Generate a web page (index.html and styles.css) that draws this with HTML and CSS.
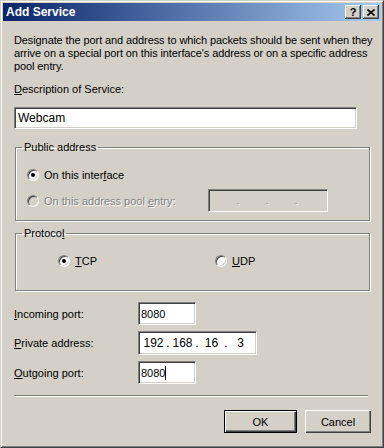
FILE: index.html
```html
<!DOCTYPE html>
<html lang="en">
<head>
<meta charset="UTF-8">
<meta name="viewport" content="width=device-width, initial-scale=1.0">
<title>Add Service</title>
<link rel="stylesheet" href="styles.css">
</head>
<body>

  <div class="window">
    <div class="titlebar">
      <span class="title">Add Service</span>
      <div class="title-buttons">
        <span class="tbtn">?</span>
        <span class="tbtn">
          <svg width="8" height="7" viewBox="0 0 8 7"><path d="M0.5 0.5 L7.5 6.5 M7.5 0.5 L0.5 6.5" stroke="#000" stroke-width="1.6"/></svg>
        </span>
      </div>
    </div>

    <div class="client">
      <p class="intro">Designate the port and address to which packets should be sent when they<br>arrive on a special port on this interface's address or on a specific address<br>pool entry.</p>

      <div class="field-label"><u>D</u>escription of Service:</div>
      <div class="textbox desc">Webcam</div>

      <fieldset class="group public">
        <legend>Public address</legend>
        <div class="group-body">
          <div class="radio-row">
            <span class="radio checked"></span>
            <span>On this inter<u>f</u>ace</span>
          </div>
          <div class="radio-row disabled">
            <span class="radio"></span>
            <span>On this address pool <u>e</u>ntry:</span>
            <div class="textbox ipbox off">
              <span class="seg"></span><span class="dot">.</span>
              <span class="seg"></span><span class="dot">.</span>
              <span class="seg"></span><span class="dot">.</span>
              <span class="seg"></span>
            </div>
          </div>
        </div>
      </fieldset>

      <fieldset class="group protocol">
        <legend>Protoco<u>l</u></legend>
        <div class="group-body proto-body">
          <div class="radio-row proto-item">
            <span class="radio checked"></span>
            <span><u>T</u>CP</span>
          </div>
          <div class="radio-row">
            <span class="radio"></span>
            <span><u>U</u>DP</span>
          </div>
        </div>
      </fieldset>

      <div class="ports">
        <span class="port-label"><u>I</u>ncoming port:</span>
        <div class="textbox port">8080</div>
        <span class="port-label"><u>P</u>rivate address:</span>
        <div class="textbox ipbox private">
          <span class="seg">192</span><span class="dot">.</span>
          <span class="seg">168</span><span class="dot">.</span>
          <span class="seg">16</span><span class="dot">.</span>
          <span class="seg">3</span>
        </div>
        <span class="port-label"><u>O</u>utgoing port:</span>
        <div class="textbox port">8080<span class="caret"></span></div>
      </div>

      <div class="separator"></div>

      <div class="button-row">
        <button class="btn default">OK</button>
        <button class="btn cancel">Cancel</button>
      </div>
    </div>
  </div>

</body>
</html>
```

FILE: styles.css
```css
* {
  box-sizing: border-box;
  margin: 0;
  padding: 0;
}

body {
  font-family: Tahoma, "Liberation Sans", Arial, sans-serif;
  font-size: 11px;
  color: #000;
  background-color: #d4d0c8;
}

/* Window frame */

.window {
  width: 384px;
  height: 448px;
  border: 1px solid;
  border-color: #d4d0c8 #404040 #404040 #d4d0c8;
  box-shadow: inset 1px 1px #fff, inset -1px -1px #808080;
  background-color: #d4d0c8;
  padding: 2px;
  display: flex;
  flex-direction: column;
}

.titlebar {
  height: 18px;
  display: flex;
  align-items: center;
  justify-content: space-between;
  padding: 0 2px 0 3px;
  background: linear-gradient(to right, #0a246a, #a6caf0);
}

.title {
  color: #fff;
  font-weight: bold;
  font-size: 12px;
}

.title-buttons {
  display: flex;
  gap: 2px;
}

.tbtn {
  width: 16px;
  height: 14px;
  display: flex;
  align-items: center;
  justify-content: center;
  background-color: #d4d0c8;
  box-shadow: inset -1px -1px #404040, inset 1px 1px #fff, inset -2px -2px #808080;
  font-weight: bold;
  font-size: 11px;
  line-height: 1;
}

/* Client area */

.client {
  padding: 13px 10px 0 11px;
  display: flex;
  flex-direction: column;
}

.intro {
  line-height: 13px;
  white-space: nowrap;
  letter-spacing: -0.1px;
}

.field-label {
  margin-top: 10px;
  line-height: 13px;
}

/* Text boxes */

.textbox {
  height: 22px;
  background-color: #fff;
  border: 1px solid;
  border-color: #808080 #fff #fff #808080;
  box-shadow: inset 1px 1px #404040, inset -1px -1px #d4d0c8;
  padding: 0 3px;
  display: flex;
  align-items: center;
}

.desc {
  margin-top: 11px;
  width: 343px;
  font-size: 12px;
}

/* Group boxes */

.group {
  margin-left: 1px;
  width: 355px;
  border: 1px solid #808080;
  box-shadow: inset 1px 1px #fff, 1px 1px #fff;
}

.group legend {
  margin-left: 6px;
  padding: 0 2px;
  line-height: 13px;
}

.public {
  margin-top: 12px;
}

.protocol {
  margin-top: 6px;
}

.group-body {
  padding: 9px 0 8px 11px;
  display: flex;
  flex-direction: column;
  gap: 3px;
}

.proto-body {
  flex-direction: row;
  padding: 9px 0 18px 42px;
}

.proto-item {
  width: 154px;
}

/* Radio buttons */

.radio-row {
  height: 23px;
  display: flex;
  align-items: center;
  gap: 5px;
}

.radio {
  width: 12px;
  height: 12px;
  border-radius: 50%;
  border: 1px solid;
  border-color: #808080 #fff #fff #808080;
  box-shadow: inset 1px 1px #404040, inset -1px -1px #d4d0c8;
  background-color: #fff;
  display: flex;
  align-items: center;
  justify-content: center;
}

.radio.checked::after {
  content: "";
  width: 4px;
  height: 4px;
  border-radius: 50%;
  background-color: #000;
}

.disabled {
  color: #808080;
  text-shadow: 1px 1px #fff;
}

.disabled .radio {
  background-color: #d4d0c8;
}

/* IP address boxes */

.ipbox {
  padding: 0 2px;
}

.ipbox .seg {
  width: 25px;
  text-align: center;
}

.ipbox .dot {
  width: 4px;
  text-align: center;
}

.off {
  margin-left: auto;
  margin-right: 41px;
  width: 120px;
  height: 23px;
  background-color: #d4d0c8;
  color: #808080;
  font-size: 9px;
}

.private {
  width: 119px;
  height: 24px;
  font-size: 12px;
}

/* Port rows */

.ports {
  margin-top: 11px;
  display: grid;
  grid-template-columns: 124px auto;
  row-gap: 6px;
  align-items: center;
  justify-items: start;
}

.port {
  width: 58px;
  height: 23px;
  padding: 0 2px;
}

.caret {
  width: 1px;
  height: 14px;
  background-color: #000;
}

.separator {
  margin-top: 11px;
  width: 354px;
  border-top: 1px solid #808080;
  border-bottom: 1px solid #fff;
}

/* Buttons */

.button-row {
  margin-top: 13px;
  display: flex;
  justify-content: flex-end;
  gap: 8px;
}

.btn {
  height: 23px;
  font-family: inherit;
  font-size: 11px;
  background-color: #d4d0c8;
  border: none;
  color: #000;
}

.default {
  width: 73px;
  border: 1px solid #000;
  box-shadow: inset 1px 1px #fff, inset -1px -1px #404040, inset -2px -2px #808080;
}

.cancel {
  width: 66px;
  box-shadow: inset 1px 1px #fff, inset -1px -1px #404040, inset -2px -2px #808080;
}
```
